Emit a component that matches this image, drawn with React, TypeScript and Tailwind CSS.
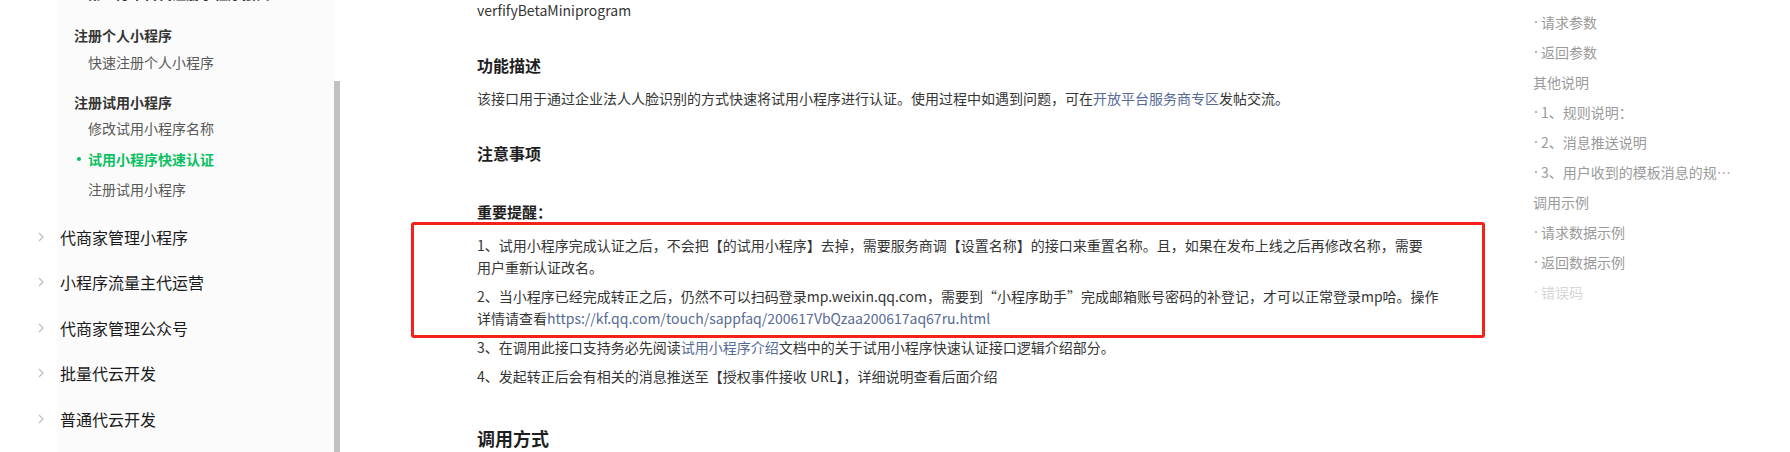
import React from 'react';

type TocItem = { text: string; dot?: boolean; faded?: boolean };

const tocItems: TocItem[] = [
  { text: '请求参数', dot: true },
  { text: '返回参数', dot: true },
  { text: '其他说明' },
  { text: '1、规则说明：', dot: true },
  { text: '2、消息推送说明', dot: true },
  { text: '3、用户收到的模板消息的规则说明', dot: true },
  { text: '调用示例' },
  { text: '请求数据示例', dot: true },
  { text: '返回数据示例', dot: true },
  { text: '错误码', dot: true, faded: true },
];

const topLevel = ['代商家管理小程序', '小程序流量主代运营', '代商家管理公众号', '批量代云开发', '普通代云开发'];

const Chevron = () => (
  <svg width="6" height="10" viewBox="0 0 6 10" className="shrink-0">
    <polyline points="1,1 5,5 1,9" fill="none" stroke="#bdbdbd" strokeWidth="1.2" />
  </svg>
);

const Sidebar = () => (
  <aside className="w-[334px] shrink-0 h-[452px] overflow-hidden bg-[linear-gradient(to_right,#ffffff_57px,#fbfbfb_57px)]">
    <div className="pl-[88px] -mt-[17px] h-[20px] leading-[20px] text-[14px] font-bold text-[#353535] whitespace-nowrap">
      第三方平台代注册小程序接口
    </div>

    <div className="pl-[74px] mt-[22px] leading-[20px] text-[14px] font-bold text-[#353535]">注册个人小程序</div>
    <div className="pl-[88px] mt-[7px] leading-[20px] text-[14px] text-[#595959]">快速注册个人小程序</div>

    <div className="pl-[74px] mt-[20px] leading-[20px] text-[14px] font-bold text-[#353535]">注册试用小程序</div>
    <div className="pl-[88px] mt-[6px] leading-[20px] text-[14px] text-[#595959]">修改试用小程序名称</div>
    <div className="flex items-center mt-[11px] leading-[20px] text-[14px] font-bold text-[#07c160]">
      <span className="ml-[77px] mr-[7px] w-[4px] h-[4px] rounded-full bg-[#07c160]" />
      试用小程序快速认证
    </div>
    <div className="pl-[88px] mt-[10px] leading-[20px] text-[14px] text-[#595959]">注册试用小程序</div>

    <ul className="mt-[15px]">
      {topLevel.map((t) => (
        <li key={t} className="flex items-center h-[45.5px] text-[16px] text-[#1a1a1a]">
          <span className="ml-[38px] w-[22px]">
            <Chevron />
          </span>
          {t}
        </li>
      ))}
    </ul>
  </aside>
);

const Link = ({ children }: { children: React.ReactNode }) => (
  <span className="text-[#576b95]">{children}</span>
);

const MainContent = () => (
  <main className="relative w-[1193px] shrink-0 h-[452px] overflow-hidden pl-[137px] text-[#353535]">
    <p className="-mt-px leading-[22px] text-[14px]">verfifyBetaMiniprogram</p>

    <h3 className="mt-[32px] leading-[24px] text-[16px] font-bold text-[#1f1f1f]">功能描述</h3>
    <p className="mt-[10px] leading-[22px] text-[14px] whitespace-nowrap">
      该接口用于通过企业法人人脸识别的方式快速将试用小程序进行认证。使用过程中如遇到问题，可在
      <Link>开放平台服务商专区</Link>发帖交流。
    </p>

    <h3 className="mt-[32px] leading-[24px] text-[16px] font-bold text-[#1f1f1f]">注意事项</h3>

    <h4 className="mt-[35px] leading-[24px] text-[15px] font-bold text-[#1f1f1f]">重要提醒：</h4>
    <ol className="mt-[10px] text-[14px] leading-[22px]">
      <li className="mb-[7px] whitespace-nowrap">
        1、试用小程序完成认证之后，不会把【的试用小程序】去掉，需要服务商调【设置名称】的接口来重置名称。且，如果在发布上线之后再修改名称，需要
        <br />
        用户重新认证改名。
      </li>
      <li className="mb-[7px] whitespace-nowrap">
        2、当小程序已经完成转正之后，仍然不可以扫码登录mp.weixin.qq.com，需要到“小程序助手”完成邮箱账号密码的补登记，才可以正常登录mp哈。操作
        <br />
        详情请查看<Link>https://kf.qq.com/touch/sappfaq/200617VbQzaa200617aq67ru.html</Link>
      </li>
      <li className="mb-[7px] whitespace-nowrap">
        3、在调用此接口支持务必先阅读<Link>试用小程序介绍</Link>文档中的关于试用小程序快速认证接口逻辑介绍部分。
      </li>
      <li className="whitespace-nowrap">
        4、发起转正后会有相关的消息推送至【授权事件接收 URL】，详细说明查看后面介绍
      </li>
    </ol>

    <h2 className="mt-[37px] leading-[28px] text-[18px] font-bold text-[#1f1f1f]">调用方式</h2>

    {/* annotation box drawn over the reminders */}
    <div className="absolute left-[71px] top-[222px] w-[1074px] h-[116px] border-[3px] border-[#f5221b] rounded-[3px]" />
  </main>
);

const Toc = () => (
  <nav className="w-[204px] shrink-0 pt-[7px] text-[14px] leading-[30px]">
    {tocItems.map((item) => (
      <div
        key={item.text}
        className={`flex items-center ${item.faded ? 'text-[#d6d6d6]' : 'text-[#9a9a9a]'}`}
      >
        {item.dot && (
          <span
            className={`ml-[2px] mr-[4px] w-[2px] h-[2px] shrink-0 rounded-full ${item.faded ? 'bg-[#d6d6d6]' : 'bg-[#9a9a9a]'}`}
          />
        )}
        <span className="truncate">{item.text}</span>
      </div>
    ))}
  </nav>
);

const App: React.FC = () => {
  return (
    <div
      className="flex w-[1790px] h-[452px] overflow-hidden bg-white"
      style={{ fontFamily: '"Noto Sans CJK SC", "Noto Sans", sans-serif' }}
    >
      <Sidebar />
      <div className="w-[6px] shrink-0 mt-[81px] h-[371px] bg-[#c1c1c1]" />
      <MainContent />
      <Toc />
    </div>
  );
};

export default App;
